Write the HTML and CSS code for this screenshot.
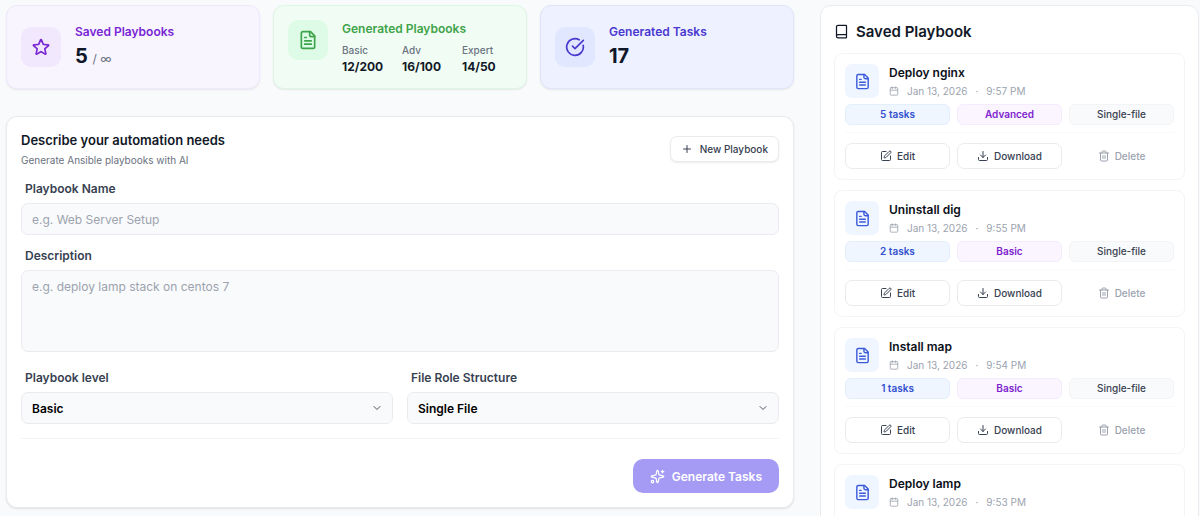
FILE: index.html
```html
<!DOCTYPE html>
<html lang="en">
<head>
  <meta charset="UTF-8">
  <meta name="viewport" content="width=device-width, initial-scale=1.0">
  <title>Playbook Generator</title>
  <link rel="stylesheet" href="styles.css">
</head>
<body>
  <!-- Icon set -->
  <svg class="sprite" aria-hidden="true">
    <symbol id="icon-star" viewBox="0 0 24 24">
      <path d="M11.48 3.5a.56.56 0 0 1 1.04 0l2.12 5.11a.56.56 0 0 0 .48.35l5.52.44c.5.04.7.66.32.99l-4.2 3.6a.56.56 0 0 0-.19.56l1.29 5.38a.56.56 0 0 1-.84.61l-4.73-2.88a.56.56 0 0 0-.58 0l-4.73 2.88a.56.56 0 0 1-.84-.61l1.29-5.38a.56.56 0 0 0-.19-.56l-4.2-3.6a.56.56 0 0 1 .32-.99l5.52-.44a.56.56 0 0 0 .48-.35z"/>
    </symbol>
    <symbol id="icon-file" viewBox="0 0 24 24">
      <path d="M15 2H6a2 2 0 0 0-2 2v16a2 2 0 0 0 2 2h12a2 2 0 0 0 2-2V7z"/>
      <path d="M14 2v4a2 2 0 0 0 2 2h4"/>
      <path d="M10 9H8M16 13H8M16 17H8"/>
    </symbol>
    <symbol id="icon-check" viewBox="0 0 24 24">
      <path d="M21.8 10A10 10 0 1 1 17 3.34"/>
      <path d="m9 11 3 3L22 4"/>
    </symbol>
    <symbol id="icon-plus" viewBox="0 0 24 24">
      <path d="M5 12h14M12 5v14"/>
    </symbol>
    <symbol id="icon-chevron" viewBox="0 0 24 24">
      <path d="m6 9 6 6 6-6"/>
    </symbol>
    <symbol id="icon-sparkles" viewBox="0 0 24 24">
      <path d="M11.02 2.81a1 1 0 0 1 1.96 0l1.05 5.56a2 2 0 0 0 1.6 1.6l5.56 1.05a1 1 0 0 1 0 1.96l-5.56 1.05a2 2 0 0 0-1.6 1.6l-1.05 5.56a1 1 0 0 1-1.96 0l-1.05-5.56a2 2 0 0 0-1.6-1.6l-5.56-1.05a1 1 0 0 1 0-1.96l5.56-1.05a2 2 0 0 0 1.6-1.6z"/>
      <path d="M20 2v4M22 4h-4"/>
      <circle cx="4" cy="20" r="2"/>
    </symbol>
    <symbol id="icon-book" viewBox="0 0 24 24">
      <path d="M4 19.5v-15A2.5 2.5 0 0 1 6.5 2H19a1 1 0 0 1 1 1v18a1 1 0 0 1-1 1H6.5a1 1 0 0 1 0-5H20"/>
    </symbol>
    <symbol id="icon-calendar" viewBox="0 0 24 24">
      <path d="M8 2v4M16 2v4M3 10h18"/>
      <rect x="3" y="4" width="18" height="18" rx="2"/>
    </symbol>
    <symbol id="icon-edit" viewBox="0 0 24 24">
      <path d="M12 3H5a2 2 0 0 0-2 2v14a2 2 0 0 0 2 2h14a2 2 0 0 0 2-2v-7"/>
      <path d="M18.38 2.62a1 1 0 0 1 3 3l-9.01 9.01a2 2 0 0 1-.86.51l-2.87.84a.5.5 0 0 1-.62-.62l.84-2.87a2 2 0 0 1 .51-.86z"/>
    </symbol>
    <symbol id="icon-download" viewBox="0 0 24 24">
      <path d="M21 15v4a2 2 0 0 1-2 2H5a2 2 0 0 1-2-2v-4M7 10l5 5 5-5M12 15V3"/>
    </symbol>
    <symbol id="icon-trash" viewBox="0 0 24 24">
      <path d="M3 6h18M19 6v14a2 2 0 0 1-2 2H7a2 2 0 0 1-2-2V6M8 6V4a2 2 0 0 1 2-2h4a2 2 0 0 1 2 2v2M10 11v6M14 11v6"/>
    </symbol>
  </svg>

  <div class="layout">
    <main class="main">
      <section class="stats">
        <div class="stat stat-purple">
          <div class="stat-icon"><svg class="icon"><use href="#icon-star"/></svg></div>
          <div>
            <h2 class="stat-title">Saved Playbooks</h2>
            <p class="stat-value">5 <span class="stat-limit">/ ∞</span></p>
          </div>
        </div>
        <div class="stat stat-green">
          <div class="stat-icon"><svg class="icon"><use href="#icon-file"/></svg></div>
          <div>
            <h2 class="stat-title">Generated Playbooks</h2>
            <dl class="levels">
              <div><dt>Basic</dt><dd>12/200</dd></div>
              <div><dt>Adv</dt><dd>16/100</dd></div>
              <div><dt>Expert</dt><dd>14/50</dd></div>
            </dl>
          </div>
        </div>
        <div class="stat stat-indigo">
          <div class="stat-icon"><svg class="icon"><use href="#icon-check"/></svg></div>
          <div>
            <h2 class="stat-title">Generated Tasks</h2>
            <p class="stat-value">17</p>
          </div>
        </div>
      </section>

      <form class="panel" onsubmit="return false">
        <div class="panel-header">
          <div>
            <h1>Describe your automation needs</h1>
            <p class="subtitle">Generate Ansible playbooks with AI</p>
          </div>
          <button type="reset" class="btn btn-new"><svg class="icon"><use href="#icon-plus"/></svg>New Playbook</button>
        </div>

        <div class="field">
          <label for="name">Playbook Name</label>
          <input type="text" id="name" placeholder="e.g. Web Server Setup">
        </div>

        <div class="field">
          <label for="description">Description</label>
          <textarea id="description" placeholder="e.g. deploy lamp stack on centos 7"></textarea>
        </div>

        <div class="field-row">
          <div class="field">
            <label for="level">Playbook level</label>
            <div class="select">
              <select id="level">
                <option>Basic</option>
                <option>Advanced</option>
                <option>Expert</option>
              </select>
              <svg class="icon"><use href="#icon-chevron"/></svg>
            </div>
          </div>
          <div class="field">
            <label for="structure">File Role Structure</label>
            <div class="select">
              <select id="structure">
                <option>Single File</option>
                <option>Roles</option>
              </select>
              <svg class="icon"><use href="#icon-chevron"/></svg>
            </div>
          </div>
        </div>

        <div class="panel-footer">
          <button type="submit" class="btn-generate"><svg class="icon"><use href="#icon-sparkles"/></svg>Generate Tasks</button>
        </div>
      </form>
    </main>

    <aside class="sidebar">
      <h2 class="sidebar-title"><svg class="icon"><use href="#icon-book"/></svg>Saved Playbook</h2>

      <article class="playbook">
        <div class="playbook-head">
          <div class="playbook-icon"><svg class="icon"><use href="#icon-file"/></svg></div>
          <div>
            <h3>Deploy nginx</h3>
            <p class="date"><svg class="icon"><use href="#icon-calendar"/></svg><span>Jan 13, 2026</span><span>·</span><span>9:57 PM</span></p>
          </div>
        </div>
        <div class="tags">
          <span class="tag tag-blue">5 tasks</span>
          <span class="tag tag-purple">Advanced</span>
          <span class="tag">Single-file</span>
        </div>
        <div class="actions">
          <button type="button" class="btn"><svg class="icon"><use href="#icon-edit"/></svg>Edit</button>
          <button type="button" class="btn"><svg class="icon"><use href="#icon-download"/></svg>Download</button>
          <button type="button" class="btn btn-delete"><svg class="icon"><use href="#icon-trash"/></svg>Delete</button>
        </div>
      </article>

      <article class="playbook">
        <div class="playbook-head">
          <div class="playbook-icon"><svg class="icon"><use href="#icon-file"/></svg></div>
          <div>
            <h3>Uninstall dig</h3>
            <p class="date"><svg class="icon"><use href="#icon-calendar"/></svg><span>Jan 13, 2026</span><span>·</span><span>9:55 PM</span></p>
          </div>
        </div>
        <div class="tags">
          <span class="tag tag-blue">2 tasks</span>
          <span class="tag tag-purple">Basic</span>
          <span class="tag">Single-file</span>
        </div>
        <div class="actions">
          <button type="button" class="btn"><svg class="icon"><use href="#icon-edit"/></svg>Edit</button>
          <button type="button" class="btn"><svg class="icon"><use href="#icon-download"/></svg>Download</button>
          <button type="button" class="btn btn-delete"><svg class="icon"><use href="#icon-trash"/></svg>Delete</button>
        </div>
      </article>

      <article class="playbook">
        <div class="playbook-head">
          <div class="playbook-icon"><svg class="icon"><use href="#icon-file"/></svg></div>
          <div>
            <h3>Install map</h3>
            <p class="date"><svg class="icon"><use href="#icon-calendar"/></svg><span>Jan 13, 2026</span><span>·</span><span>9:54 PM</span></p>
          </div>
        </div>
        <div class="tags">
          <span class="tag tag-blue">1 tasks</span>
          <span class="tag tag-purple">Basic</span>
          <span class="tag">Single-file</span>
        </div>
        <div class="actions">
          <button type="button" class="btn"><svg class="icon"><use href="#icon-edit"/></svg>Edit</button>
          <button type="button" class="btn"><svg class="icon"><use href="#icon-download"/></svg>Download</button>
          <button type="button" class="btn btn-delete"><svg class="icon"><use href="#icon-trash"/></svg>Delete</button>
        </div>
      </article>

      <article class="playbook">
        <div class="playbook-head">
          <div class="playbook-icon"><svg class="icon"><use href="#icon-file"/></svg></div>
          <div>
            <h3>Deploy lamp</h3>
            <p class="date"><svg class="icon"><use href="#icon-calendar"/></svg><span>Jan 13, 2026</span><span>·</span><span>9:53 PM</span></p>
          </div>
        </div>
      </article>
    </aside>
  </div>
</body>
</html>
```
FILE: styles.css
```css
* {
  box-sizing: border-box;
  margin: 0;
  padding: 0;
}

body {
  height: 100vh;
  overflow: hidden;
  background-color: #f9fafb;
  color: #111827;
  font-family: Inter, sans-serif;
  font-size: 12px;
}

button,
input,
textarea,
select {
  font: inherit;
}

.sprite {
  display: none;
}

.icon {
  width: 12px;
  height: 12px;
  flex-shrink: 0;
  fill: none;
  stroke: currentColor;
  stroke-width: 2;
  stroke-linecap: round;
  stroke-linejoin: round;
}

.layout {
  display: grid;
  grid-template-columns: 1fr 379px;
  align-items: start;
  gap: 26px;
  padding: 5px 1px 0 6px;
}

/* Stats */
.stats {
  display: grid;
  grid-template-columns: repeat(3, minmax(0, 1fr));
  gap: 13px;
  margin-bottom: 27px;
}

.stat {
  display: flex;
  align-items: center;
  gap: 14px;
  height: 84px;
  padding: 0 14px;
  border: 1px solid;
  border-radius: 11px;
  box-shadow: 0 1px 2px rgba(0, 0, 0, 0.08);
}

.stat-icon {
  display: flex;
  align-items: center;
  justify-content: center;
  flex-shrink: 0;
  width: 40px;
  height: 40px;
  border-radius: 10px;
}

.stat-icon .icon {
  width: 20px;
  height: 20px;
}

.stat-title {
  font-size: 12px;
  line-height: 18px;
  font-weight: 600;
}

.stat-value {
  color: #0f172a;
  font-size: 20px;
  line-height: 30px;
  font-weight: 700;
}

.stat-limit {
  color: #6b7280;
  font-size: 12px;
  line-height: 1;
  font-weight: 400;
}

.stat-purple {
  background-color: #f8f5ff;
  border-color: #f0e8fd;
}

.stat-purple .stat-icon {
  background-color: #f1e8fe;
}

.stat-purple .stat-icon,
.stat-purple .stat-title {
  color: #7926d3;
}

.stat-green {
  background-color: #f1fdf4;
  border-color: #def7e5;
}

.stat-green .stat-icon {
  align-self: flex-start;
  margin-top: 14px;
  background-color: #ddfbe6;
}

.stat-green .stat-icon,
.stat-green .stat-title {
  color: #3fa34a;
}

.stat-indigo {
  background-color: #eef1ff;
  border-color: #e0e5fb;
}

.stat-indigo .stat-icon {
  background-color: #e0e7fe;
}

.stat-indigo .stat-icon,
.stat-indigo .stat-title {
  color: #4a38cf;
}

.levels {
  display: flex;
  margin-top: 4px;
}

.levels div {
  flex-shrink: 0;
  width: 60px;
}

.levels div:last-child {
  width: auto;
}

.levels dt {
  color: #6b7280;
  font-size: 10px;
  line-height: 16px;
  font-weight: 500;
}

.levels dd {
  font-size: 12px;
  line-height: 17px;
  font-weight: 700;
}

/* Form */
.panel {
  padding: 14px;
  background-color: #fff;
  border: 1px solid #e9ebef;
  border-radius: 11px;
  box-shadow: 0 1px 2px rgba(0, 0, 0, 0.1);
}

.panel-header {
  display: flex;
  align-items: center;
  justify-content: space-between;
  margin-bottom: 9px;
}

h1 {
  font-size: 13px;
  line-height: 18px;
  font-weight: 600;
}

.subtitle {
  color: #6b7280;
  font-size: 10px;
  line-height: 22px;
}

.btn {
  display: flex;
  align-items: center;
  justify-content: center;
  gap: 5px;
  height: 26px;
  background-color: #fff;
  border: 1px solid #e9ebef;
  border-radius: 7px;
  color: #374151;
  font-size: 10px;
  font-weight: 500;
  cursor: pointer;
}

.btn-new {
  gap: 7px;
  margin-bottom: 4px;
  padding: 0 10px;
  box-shadow: 0 1px 2px rgba(0, 0, 0, 0.08);
}

.field {
  display: flex;
  flex-direction: column;
  gap: 5px;
  margin-bottom: 12px;
}

label {
  padding-left: 4px;
  color: #374151;
  line-height: 18px;
  font-weight: 600;
}

input,
textarea,
select {
  width: 100%;
  height: 32px;
  padding: 0 10px;
  background-color: #f9fafb;
  border: 1px solid #e9ebef;
  border-radius: 7px;
  color: #000;
}

textarea {
  height: 82px;
  padding: 7px 10px;
  line-height: 17px;
  resize: none;
}

::placeholder {
  color: #9ca3af;
}

.field-row {
  display: grid;
  grid-template-columns: 1fr 1fr;
  gap: 14px;
  margin: 17px 0 2px;
}

.select {
  position: relative;
}

select {
  appearance: none;
  font-weight: 600;
}

.select .icon {
  position: absolute;
  top: 10px;
  right: 10px;
  color: #4b5563;
  pointer-events: none;
}

.panel-footer {
  display: flex;
  justify-content: flex-end;
  padding-top: 20px;
  border-top: 1px solid #f3f4f6;
}

.btn-generate {
  display: flex;
  align-items: center;
  gap: 7px;
  height: 34px;
  padding: 0 17px;
  background-color: #a59bf5;
  border: none;
  border-radius: 10px;
  color: #fff;
  font-weight: 600;
  cursor: pointer;
}

.btn-generate .icon {
  width: 15px;
  height: 15px;
}

/* Saved playbooks */
.sidebar {
  display: flex;
  flex-direction: column;
  gap: 10px;
  padding: 15px 13px;
  background-color: #fff;
  border: 1px solid #e9ebef;
  border-radius: 11px;
}

.sidebar-title {
  display: flex;
  align-items: center;
  gap: 7px;
  margin-bottom: 1px;
  font-size: 15px;
  line-height: 21px;
  font-weight: 600;
}

.sidebar-title .icon {
  width: 15px;
  height: 15px;
}

.playbook {
  padding: 10px;
  border: 1px solid #f3f4f6;
  border-radius: 8px;
}

.playbook-head {
  display: flex;
  gap: 10px;
}

.playbook-icon {
  display: flex;
  align-items: center;
  justify-content: center;
  width: 34px;
  height: 34px;
  background-color: #eff6ff;
  border-radius: 7px;
  color: #3b5bdb;
}

.playbook-icon .icon {
  width: 17px;
  height: 17px;
}

h3 {
  color: #0b0f19;
  font-size: 12px;
  line-height: 17px;
  font-weight: 600;
}

.date {
  display: flex;
  align-items: center;
  gap: 8px;
  color: #9ca3af;
  font-size: 10px;
  line-height: 20px;
}

.date .icon {
  width: 10px;
  height: 10px;
}

.tags,
.actions {
  display: grid;
  grid-template-columns: repeat(3, 1fr);
  gap: 7px;
}

.tags {
  margin-top: 3px;
}

.tag {
  height: 21px;
  background-color: #f9fafb;
  border: 1px solid #f3f4f6;
  border-radius: 6px;
  color: #374151;
  font-size: 10px;
  line-height: 19px;
  font-weight: 500;
  text-align: center;
}

.tag-blue {
  background-color: #eff6ff;
  border-color: #e3effd;
  color: #3350cf;
  font-weight: 600;
}

.tag-purple {
  background-color: #faf5ff;
  border-color: #f5ebfe;
  color: #7e22ce;
  font-weight: 600;
}

.actions {
  margin-top: 7px;
  padding-top: 10px;
  border-top: 1px solid #f9fafb;
}

.btn-delete {
  border-color: transparent;
  color: #9ca3af;
}
```
